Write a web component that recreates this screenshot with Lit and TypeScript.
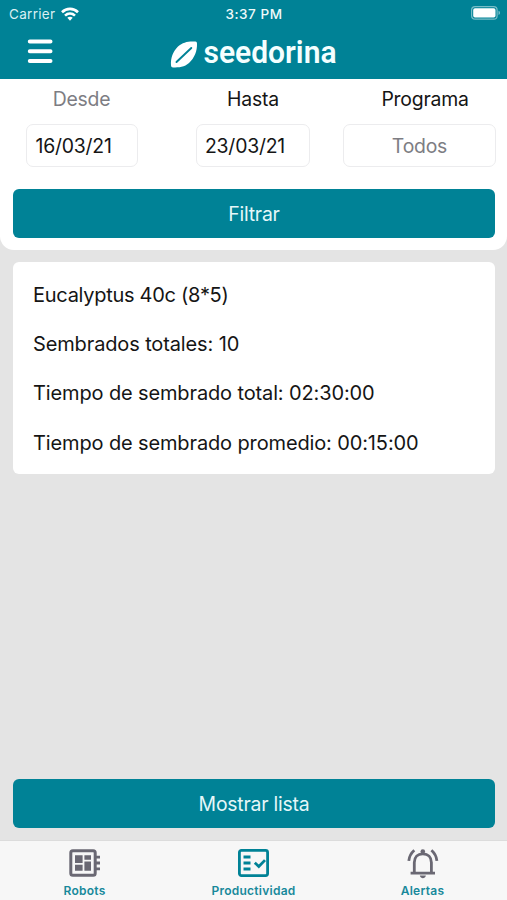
import { LitElement, html, css, svg } from "lit";
import { customElement, property } from "lit/decorators.js";

const robots = svg`
  <rect x="1.8" y="1.8" width="24.4" height="24.4" rx="2" fill="none" stroke="currentColor" stroke-width="3"/>
  <path fill="currentColor" d="M6 6.3h7.6v7.6H6zM15.4 6.3H22v4.4h-6.6zM6 15.7h7.6v6H6zM15.4 12.4H22v9.3h-6.6zM27 6.7h4v2.8h-4zM27 12.6h4v2.8h-4zM27 18.5h4v2.8h-4z"/>`;

const checklist = svg`
  <rect x="1.4" y="1.4" width="28.2" height="25.2" rx="2" fill="none" stroke="currentColor" stroke-width="2.8"/>
  <path fill="none" stroke="currentColor" stroke-width="2.8" d="M5.5 8h7M5.5 14h7M5.5 20h7M16.8 13.7l4 3.8 6.2-6.4"/>`;

const bell = svg`
  <path fill="none" stroke="currentColor" stroke-width="2.8" d="M3.6 24.100h24.400M7.300 24v-10.500c0-5 3.200-8.700 8.500-8.700s8.600 3.700 8.600 8.700v10.500"/>
  <path fill="none" stroke="currentColor" stroke-width="2.800" d="M1.800 11.800C2.200 7.200 4.200 3.900 7.300 1.200M29.900 11.800C29.500 7.200 27.500 3.900 24.400 1.200"/>
  <circle cx="15.800" cy="2.600" r="2.300" fill="currentColor"/>
  <path fill="currentColor" d="M12.800 26.600h6.100c-.4 1.800-1.600 2.600-3 2.600s-2.700-.8-3.100-2.600z"/>`;

@customElement("app-header")
class AppHeader extends LitElement {
  static styles = css`
    :host { display: block; height: 79px; background: #008296; color: #fff; }
    .status { display: grid; grid-template-columns: 1fr auto 1fr; align-items: center; height: 27px; padding: 0 6px 0 9px; font-size: 13.5px; }
    .carrier { display: flex; align-items: center; gap: 6px; letter-spacing: 0.3px; color: #d9f0f3; }
    .time { font-weight: 500; font-size: 13.5px; letter-spacing: 0.55px; color: #f0fafb; position: relative; left: -1px; }
    .battery { justify-self: end; position: relative; top: -1px; }
    .bar { display: grid; grid-template-columns: 1fr auto 1fr; align-items: start; height: 52px; }
    .menu { margin: 11px 0 0 27px; }
    .brand { margin-top: 6px; overflow: visible; }
    svg { display: block; }
    .name { font-family: Roboto, sans-serif; font-weight: 600; font-size: 32px; fill: #f4ffff; }
  `;
  render() {
    return html`
      <div class="status">
        <span class="carrier">Carrier
          <svg width="18" height="14" viewBox="0 0 18 14" fill="none" stroke="#fff" stroke-width="2.6">
            <path d="M1 5.2C5.5.8 12.5.8 17 5.2"/><path d="M4 8.6c2.9-2.7 7.1-2.7 10 0"/>
            <path fill="#fff" stroke="none" d="M6.3 10.8c1.5-1.4 3.9-1.4 5.4 0L9 13.700z"/>
          </svg>
        </span>
        <span class="time">3:37 PM</span>
        <svg class="battery" width="30" height="14" viewBox="0 0 30 14">
          <rect x=".6" y=".6" width="25.5" height="12.6" rx="3.5" fill="none" stroke="#78bdc7" stroke-width="1.2"/>
          <rect x="2.2" y="2.2" width="22.3" height="9.4" rx="1.8" fill="#fff"/>
          <path d="M27.5 4.8c2 .6 2 3.600 0 4.200z" fill="#78bdc7"/>
        </svg>
      </div>
      <div class="bar">
        <svg class="menu" width="26" height="26" viewBox="0 0 26 26" stroke="#fff" stroke-width="4" stroke-linecap="round">
          <path d="M2.8 3.5h20.7M2.8 13.2h20.7M2.8 23h20.7"/>
        </svg>
        <svg class="brand" width="168" height="40" viewBox="0 0 168 40">
          <path fill="#fff" d="M25.500 8.500Q27 8.500 27 10.500C27.300 18 24.500 25 19 30 14.500 34 9 34.500 3 34.500Q1 34.500 1 32.500C.5 25 3 18.500 8 13.500 13 9 18.500 8 25.500 8.500z"/>
          <path stroke="#008296" stroke-width="1.900" stroke-linecap="round" d="M6.500 29 21.300 15"/>
          <text class="name" x="33.500" y="29.500" textLength="133" lengthAdjust="spacingAndGlyphs">seedorina</text>
        </svg>
        <span></span>
      </div>`;
  }
}

@customElement("filter-field")
class FilterField extends LitElement {
  @property() label = "";
  @property() value = "";
  static styles = css`
    :host { display: flex; flex-direction: column; align-items: center; font-size: 19.4px; letter-spacing: -0.22px; }
    .label { height: 39px; line-height: 40px; color: var(--label, #151515); }
    .box { box-sizing: border-box; height: 43px; line-height: 42px; margin-top: 6px; border: 1px solid #ececee; border-radius: 7px; width: var(--w); padding-left: var(--pad, 0); text-align: var(--align, left); color: var(--value, #151515); margin-right: var(--mr, 0); white-space: nowrap; }
  `;
  render() {
    return html`<span class="label">${this.label}</span><div class="box">${this.value}</div>`;
  }
}

@customElement("tab-item")
class TabItem extends LitElement {
  @property() label = "";
  @property({ attribute: false }) icon: unknown;
  static styles = css`
    :host { display: flex; flex-direction: column; align-items: center; padding-top: 8px; }
    svg { display: block; overflow: visible; }
    .label { color: #17899b; font-size: 12px; line-height: 16px; font-weight: 600; letter-spacing: .25px; margin-top: 4px; }
  `;
  render() {
    return html`<svg width="31" height="30" viewBox="0 0 31 30">${this.icon}</svg><span class="label">${this.label}</span>`;
  }
}

@customElement("app-root")
class AppRoot extends LitElement {
  static styles = css`
    :host { display: flex; flex-direction: column; height: 900px; overflow: hidden; background: #e4e4e4; font-family: Inter, "Liberation Sans", sans-serif; color: #151515; }
    .filters { height: 171px; background: #fff; border-radius: 0 0 14px 14px; flex: none; }
    .fields { display: grid; grid-template-columns: 163px 180px 164px; height: 110px; }
    .from { --label: #7d7d83; --w: 112px; --pad: 9px; }
    .to { --w: 114px; --pad: 8px; }
    .program { --w: 153px; --align: center; --value: #7d7d83; --mr: 11px; }
    .button { height: 49px; line-height: 50px; margin: 0 12px 0 13px; border-radius: 6px; background: #008296; color: #e5f7f9; text-align: center; font-size: 19.4px; letter-spacing: -0.22px; flex: none; }
    .card { margin: 12px 12px 0 13px; height: 212px; box-sizing: border-box; padding: 9px 20px; background: #fff; border-radius: 6px; font-size: 20px; letter-spacing: -0.13px; flex: none; }
    .line { height: 49.2px; line-height: 49.2px; white-space: nowrap; }
    .line:first-child { letter-spacing: -0.28px; }
    .space { flex: 1; }
    .tabs { display: grid; grid-template-columns: repeat(3, 1fr); height: 60px; box-sizing: border-box; margin-top: 12px; border-top: 1px solid #dcdcdc; background: #f7f7f7; color: #6a6873; flex: none; }
    .active { color: #008296; }
  `;
  render() {
    const lines = ["Eucalyptus 40c (8*5)", "Sembrados totales: 10", "Tiempo de sembrado total: 02:30:00", "Tiempo de sembrado promedio: 00:15:00"];
    return html`
      <app-header></app-header>
      <section class="filters">
        <div class="fields">
          <filter-field class="from" label="Desde" value="16/03/21"></filter-field>
          <filter-field class="to" label="Hasta" value="23/03/21"></filter-field>
          <filter-field class="program" label="Programa" value="Todos"></filter-field>
        </div>
        <div class="button">Filtrar</div>
      </section>
      <section class="card">${lines.map((l) => html`<div class="line">${l}</div>`)}</section>
      <div class="space"></div>
      <div class="button">Mostrar lista</div>
      <nav class="tabs">
        <tab-item label="Robots" .icon=${robots}></tab-item>
        <tab-item class="active" label="Productividad" .icon=${checklist}></tab-item>
        <tab-item label="Alertas" .icon=${bell}></tab-item>
      </nav>`;
  }
}
